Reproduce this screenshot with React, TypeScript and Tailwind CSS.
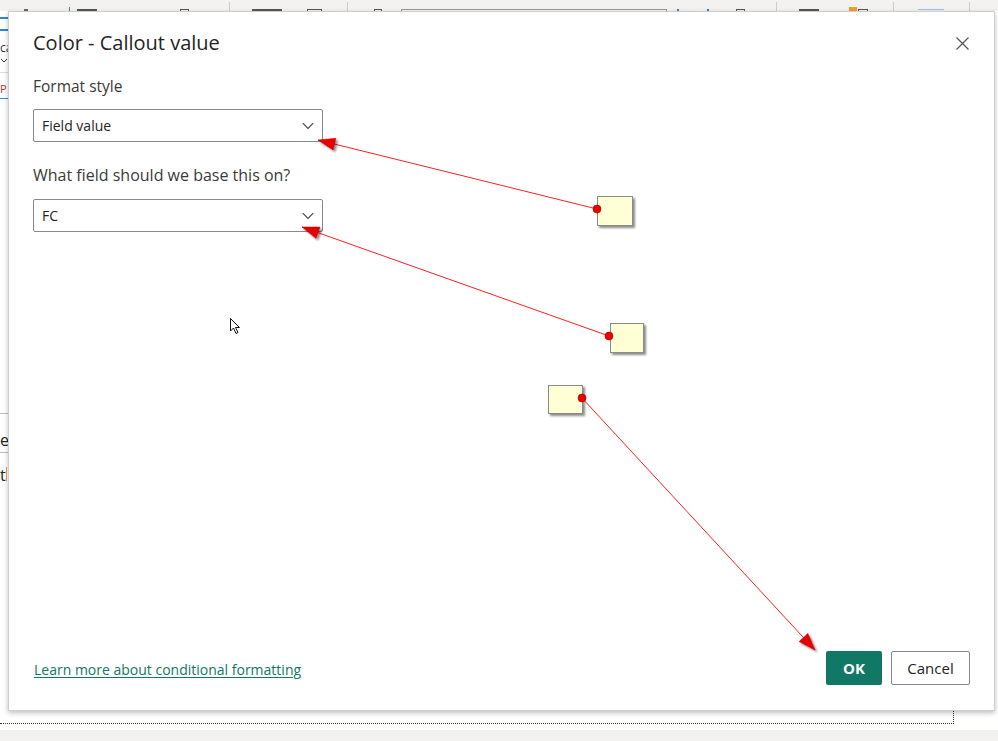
import React from "react"

type Pt = [number, number]

function arrowHead(from: Pt, to: Pt, len = 17, half = 6) {
    const dx = to[0] - from[0]
    const dy = to[1] - from[1]
    const d = Math.hypot(dx, dy)
    const ux = dx / d
    const uy = dy / d
    const bx = to[0] - ux * len
    const by = to[1] - uy * len
    const p1 = `${bx - uy * half},${by + ux * half}`
    const p2 = `${bx + uy * half},${by - ux * half}`
    return `${to[0]},${to[1]} ${p1} ${p2}`
}

const callouts: { box: [number, number, number, number]; from: Pt; to: Pt }[] = [
    { box: [597, 196, 35, 29], from: [597, 209], to: [318, 140] },
    { box: [610, 323, 33, 29], from: [609, 336], to: [302, 227] },
    { box: [548, 385, 34, 28], from: [582, 398], to: [815, 650] },
]

function Annotations() {
    return (
        <svg className="absolute inset-0 pointer-events-none" width={998} height={741}>
            <defs>
                <filter id="sh" x="-30%" y="-30%" width="160%" height="160%">
                    <feDropShadow dx="2" dy="2" stdDeviation="1.2" floodColor="#000" floodOpacity="0.45" />
                </filter>
            </defs>
            {callouts.map((c, i) => (
                <g key={i}>
                    <rect x={c.box[0] + 0.5} y={c.box[1] + 0.5} width={c.box[2]} height={c.box[3]} fill="#ffffd6" stroke="#8a8a8a" filter="url(#sh)" />
                    <line x1={c.from[0]} y1={c.from[1]} x2={c.to[0]} y2={c.to[1]} stroke="#ff2020" strokeWidth={1} />
                    <polygon points={arrowHead(c.from, c.to)} fill="#e60000" stroke="#c00000" strokeWidth={0.5} filter="url(#sh)" />
                    <circle cx={c.from[0]} cy={c.from[1]} r={4} fill="#ee0000" stroke="#b00000" strokeWidth={0.6} />
                </g>
            ))}
            {/* mouse cursor */}
            <path d="M230.5 318.5 L230.5 331 L233.5 328 L236 333.5 L238 332.5 L235.5 327.5 L239.5 327.5 Z" fill="#fff" stroke="#111" strokeWidth={1} strokeLinejoin="round" />
        </svg>
    )
}

function Chevron() {
    return (
        <svg width="12" height="8" viewBox="0 0 12 8" className="shrink-0">
            <path d="M0.8 1.2 L6 6.4 L11.2 1.2" fill="none" stroke="#444" strokeWidth="1.1" />
        </svg>
    )
}

function Select({ value }: { value: string }) {
    return (
        <div className="w-[290px] h-[33px] border border-[#8a8886] rounded-[2px] flex items-center justify-between pl-[8px] pr-[8px] bg-white">
            <span className="text-[14px] text-[#252423]">{value}</span>
            <Chevron />
        </div>
    )
}

export default function App() {
    return (
        <div className="relative w-[998px] h-[741px] overflow-hidden bg-white" style={{ fontFamily: '"Open Sans", "Noto Sans", sans-serif' }}>
            {/* background toolbar */}
            <div className="h-[11px] bg-[#f3f2f1] flex items-end overflow-hidden">
                <div className="ml-[24px] w-[4px] h-[2px] bg-[#666]" />
                <div className="ml-[41px] w-[1px] h-[4px] bg-[#3a9a3a]" />
                <div className="ml-[7px] w-[20px] h-[2px] border-t-2 border-x border-[#555]" />
                <div className="ml-[83px] w-[9px] h-[2px] border-t border-x border-[#555]" />
                <div className="ml-[40px] w-[1px] h-[9px] bg-[#ccc]" />
                <div className="ml-[22px] w-[30px] h-[2px] border-t-2 border-x border-[#555]" />
                <div className="ml-[25px] w-[15px] h-[2px] border-t border-x border-[#555]" />
                <div className="ml-[25px] w-[1px] h-[9px] bg-[#ccc]" />
                <div className="ml-[26px] w-[8px] h-[2px] border-t border-x border-[#555]" />
                <div className="ml-[19px] w-[266px] h-[2px] border-t border-x border-[#999]" />
                <div className="ml-[10px] w-[2px] h-[2px] bg-[#2a86d6]" />
                <div className="ml-[28px] w-[2px] h-[2px] bg-[#2a86d6]" />
                <div className="ml-[27px] w-[9px] h-[2px] border-t border-x border-[#555]" />
                <div className="ml-[31px] w-[1px] h-[9px] bg-[#ccc]" />
                <div className="ml-[22px] w-[20px] h-[2px] border-t-2 border-x border-[#555]" />
                <div className="ml-[30px] w-[8px] h-[4px] bg-[#f0a030]" />
                <div className="ml-[1px] w-[10px] h-[2px] border-t border-x border-[#555]" />
                <div className="ml-[25px] w-[1px] h-[9px] bg-[#ccc]" />
                <div className="ml-[24px] w-[26px] h-[2px] border-t border-[#9cc3e6]" />
                <div className="ml-[25px] w-[1px] h-[9px] bg-[#ccc]" />
            </div>

            {/* background report canvas */}
            <div className="h-[719px] flex flex-col">
                <div className="w-[954px] h-[713px] border-b border-r border-dotted border-[#333] flex flex-col">
                    <div className="w-[8px] flex flex-col text-[12px] leading-none text-[#333] overflow-hidden">
                        <div className="mt-[6px] h-[2px] w-[8px] bg-[#2b88d8]" />
                        <div className="mt-[10px] h-[2px] w-[8px] bg-[#2b88d8]" />
                        <div className="mt-[11px] h-[12px]">ca</div>
                        <svg width="8" height="6" viewBox="0 0 8 6" className="mt-[4px]">
                            <path d="M1 1 L4 4 L7 1" fill="none" stroke="#333" strokeWidth="1" />
                        </svg>
                        <div className="mt-[8px] h-[1px] w-[8px] bg-[#ddd]" />
                        <div className="mt-[10px] h-[12px] text-[11px] text-[#a4373a]">P</div>
                        <div className="mt-[3px] h-[1px] w-[8px] bg-[#2b88d8]" />
                        <div className="mt-[314px] h-[1px] w-[8px] bg-[#bbb]" />
                        <div className="mt-[18px] text-[16px] text-[#222]">e</div>
                        <div className="mt-[4px] h-[1px] w-[8px] bg-[#bbb]" />
                        <div className="mt-[14px] text-[16px] text-[#222] flex">t<span className="w-[1px] h-[14px] bg-[#f0a030]" /></div>
                    </div>
                </div>
            </div>
            <div className="h-[11px] bg-[#f3f2f1]" />

            {/* dialog */}
            <div className="absolute left-[8px] top-[11px] w-[987px] h-[700px] bg-white border border-[#cfcfcf] shadow-[0_2px_5px_rgba(0,0,0,0.25)] flex flex-col px-[24px] pb-[25px]">
                <div className="flex items-center justify-between pt-[17px]">
                    <h1 className="text-[20px] leading-[28px] text-[#252423]">Color - Callout value</h1>
                    <button className="w-[16px] h-[16px] mr-[0px] flex items-center justify-center">
                        <svg width="13" height="13" viewBox="0 0 13 13">
                            <path d="M0.5 0.5 L12.5 12.5 M12.5 0.5 L0.5 12.5" stroke="#555" strokeWidth="1.2" />
                        </svg>
                    </button>
                </div>

                <div className="mt-[18px] text-[15.5px] leading-[22px] text-[#3b3a39]">Format style</div>
                <div className="mt-[12px]">
                    <Select value="Field value" />
                </div>

                <div className="mt-[22px] text-[16px] leading-[22px] text-[#3b3a39]">What field should we base this on?</div>
                <div className="mt-[13px]">
                    <Select value="FC" />
                </div>

                <div className="mt-auto flex items-end justify-between">
                    <a className="text-[14px] leading-[20px] text-[#117865] underline underline-offset-2 mb-[5px] ml-[1px]">
                        Learn more about conditional formatting
                    </a>
                    <div className="flex gap-[9px]">
                        <button className="w-[56px] h-[34px] bg-[#117865] rounded-[2px] text-white font-bold text-[15px]">OK</button>
                        <button className="w-[79px] h-[34px] bg-white border border-[#8a8886] rounded-[2px] text-[#252423] text-[15px]">Cancel</button>
                    </div>
                </div>
            </div>

            <Annotations />
        </div>
    )
}
